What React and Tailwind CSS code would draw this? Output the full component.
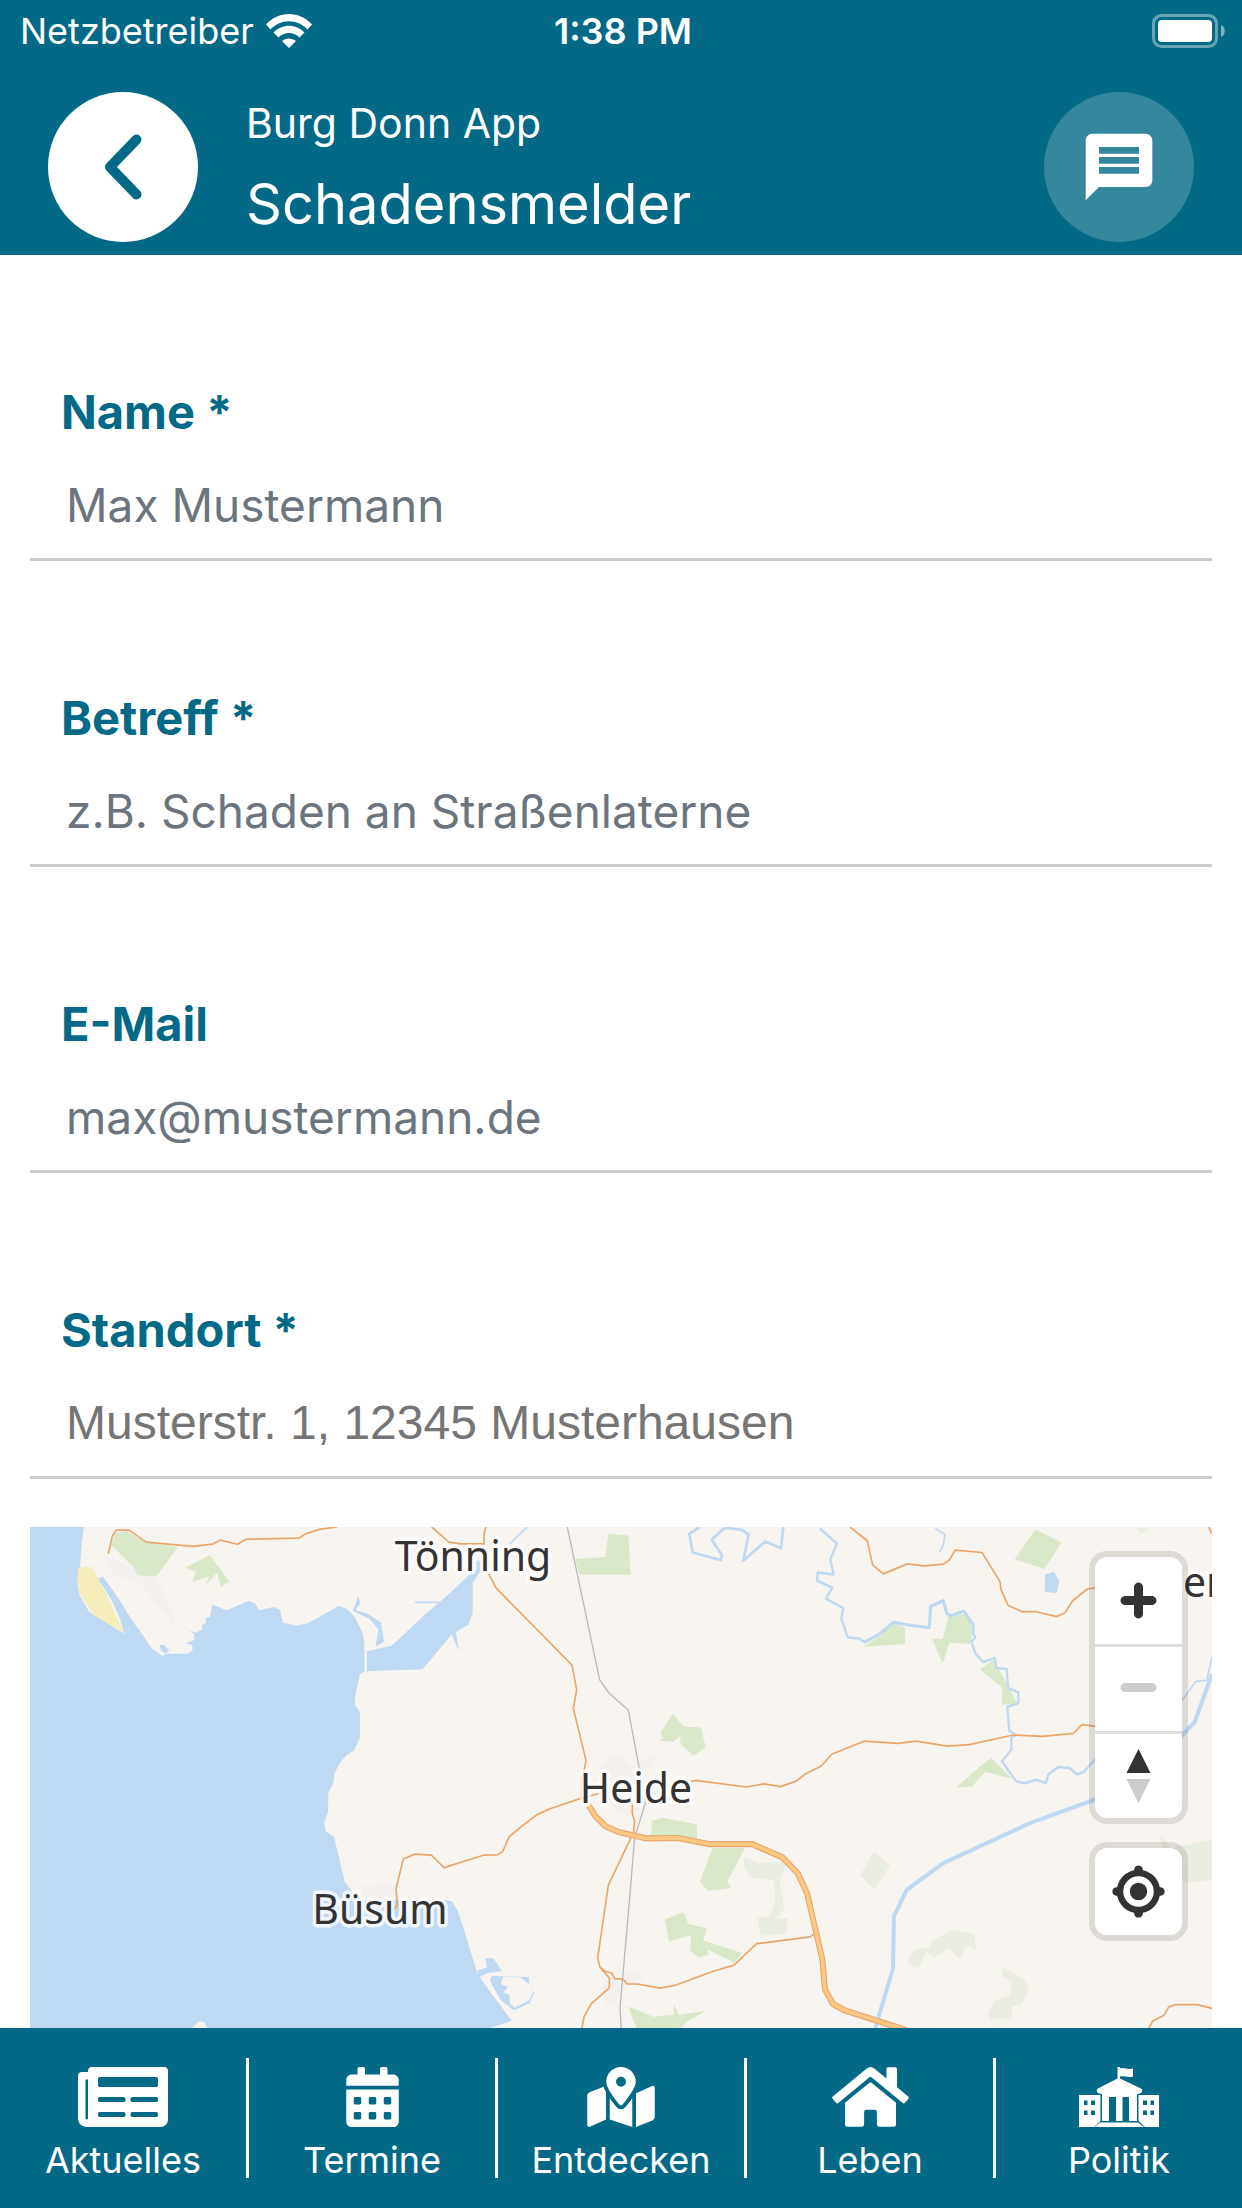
import React from 'react';
import { FaNewspaper, FaCalendarAlt, FaMapMarkedAlt, FaHome } from 'react-icons/fa';
import { MdMessage } from 'react-icons/md';
import clsx from 'clsx';

const fields = [
  { id: 'name', label: 'Name *', type: 'text', placeholder: 'Max Mustermann' },
  { id: 'subject', label: 'Betreff *', type: 'text', placeholder: 'z.B. Schaden an Straßenlaterne' },
  { id: 'email', label: 'E-Mail', type: 'email', placeholder: 'max@mustermann.de' },
  { id: 'location', label: 'Standort *', type: 'text', placeholder: 'Musterstr. 1, 12345 Musterhausen', search: true },
];

const TownHall = ({ className }) => (
  <svg viewBox="0 0 80 60" fill="currentColor" className={className} aria-hidden="true">
    <path d="M38.500 0h2.500v1.500c4-1.500 8 1.500 13 0v8c-5 1.500-9-1-13 0V11.500L62 21.500c2 1 1.500 4-1 5L58 27v27H50V30h-6.500v24H37V30h-7v24h-7V27l-3-.5c-2.500-1-3-4-1-5l19.500-10z" />
    <path d="M21 55.500h38l6 4.500H15.500z" />
    <path fillRule="evenodd" d="M0 28h21.500v26L15 60H0zM5 33.500v4.500h3.500v-4.500zm7 0v4.500h4v-4.500zM5 43.500V48h3.500v-4.500zm7 0V48h4v-4.500z" />
    <path fillRule="evenodd" d="M80 28H59.500v26l6.500 6H80zM75 33.500v4.500h-3.500v-4.500zm-7 0v4.500h-4v-4.500zM75 43.500V48h-3.500v-4.500zm-7 0V48h-4v-4.500z" />
  </svg>
);

const tabs = [
  { title: 'Aktuelles', icon: FaNewspaper, size: 'w-[90px] h-20' },
  { title: 'Termine', icon: FaCalendarAlt, size: 'w-[53px] h-[60px]' },
  { title: 'Entdecken', icon: FaMapMarkedAlt, size: 'w-[68px] h-[60px]' },
  { title: 'Leben', icon: FaHome, size: 'w-[77px] h-[68px]' },
  { title: 'Politik', icon: TownHall, size: 'w-20 h-[60px]' },
];

function StatusBar() {
  return (
    <div className="grid grid-cols-3 items-center h-[62px] pl-5 pr-4 text-[36px] leading-[44px]">
      <div className="flex items-center gap-3">
        <span>Netzbetreiber</span>
        <svg viewBox="0 0 46 34" className="w-[46px] h-[34px]" fill="currentColor" aria-hidden="true">
          <path d="M0 10.500C12.500-3.500 33.500-3.500 46 10.500L41.500 15.500C31.500 4.500 14.500 4.500 4.500 15.500z" />
          <path d="M7.500 18.500C16 9.500 30 9.500 38.500 18.500L33.500 23.500C28 17.500 18 17.500 12.500 23.500z" />
          <path d="M16 27C20 23.500 26 23.500 30 27L23 34z" />
        </svg>
      </div>
      <span className="text-center font-semibold">1:38 PM</span>
      <svg viewBox="0 0 74 34" className="w-[74px] h-[34px] justify-self-end" aria-label="Akku">
        <rect x="1.500" y="1.500" width="63" height="31" rx="8" fill="none" stroke="#fff" strokeOpacity="0.4" strokeWidth="3" />
        <rect x="6" y="6" width="54" height="22" rx="4" fill="#fff" />
        <path d="M69 11c5 1.500 5 10.500 0 12z" fill="#fff" fillOpacity="0.5" />
      </svg>
    </div>
  );
}

function Header() {
  return (
    <header className="shrink-0 bg-[#036986] text-white">
      <StatusBar />
      <div className="flex items-center gap-12 h-[193px] px-12 pt-[17px]">
        <button type="button" aria-label="Zurück" className="flex items-center justify-center size-[150px] shrink-0 rounded-full bg-white text-[#036986]">
          <svg viewBox="0 0 38 66" className="w-[38px] h-[66px]" fill="none" stroke="currentColor" strokeWidth="10" strokeLinecap="round" strokeLinejoin="round" aria-hidden="true">
            <path d="M32.500 5.500 6 33l26.500 27.500" />
          </svg>
        </button>
        <div className="flex-1 min-w-0 flex flex-col gap-5 pt-1">
          <p className="text-[41px] leading-[50px]">Burg Donn App</p>
          <h1 className="text-[56px] leading-[72px]">Schadensmelder</h1>
        </div>
        <button type="button" aria-label="Nachrichten" className="flex items-center justify-center size-[150px] shrink-0 rounded-full bg-[#35879d]">
          <MdMessage className="size-20" />
        </button>
      </div>
    </header>
  );
}

function Field({ id, label, type, placeholder, search }) {
  return (
    <div className="flex flex-col shrink-0 pt-[129px] pb-5 border-b-3 border-[#cbcbcb]">
      <label htmlFor={id} className="px-[31px] text-[47px] leading-[56px] font-bold text-[#036986]">{label}</label>
      <input
        id={id}
        type={type}
        placeholder={placeholder}
        className={clsx(
          'mt-8 h-[66px] px-9 bg-transparent outline-none',
          search
            ? "text-[48px] font-['Liberation_Sans',Arial,sans-serif] placeholder:text-[#757575]"
            : 'text-[46px] placeholder:text-[#6c757d]'
        )}
      />
    </div>
  );
}

function MapCanvas() {
  return (
    <svg viewBox="0 0 1182 501" preserveAspectRatio="xMidYMin slice" className="size-full" role="img" aria-label="Karte">
      <rect width="1182" height="501" fill="#f8f4f0" />
      <g transform="scale(.33333 .34439) translate(-90 -78)" strokeLinejoin="round">
        {/* built-up areas */}
        <g fill="#f3f0ed">
          <path d="M310 160l50 20 50 10 5 30 60 10 50 130-60-60-40-60-80-20-40-50z" />
          <path d="M1085 1122l110-8-10 45-95-6z" />
          <path d="M1835 742l30 5 20 28 90-38-40 60 30 20-20 70-60 30-70-40-20-90z" />
          <path d="M1805 1400l110-35 20 20-70 25-20 60-30-10z" />
        </g>
        {/* sea and estuary */}
        <path
          fill="#bfd9f2"
          d="M90 78H252L246 120 240 195 232 235 238 275 268 325 372 387 360 345 335 290 294 228 308 222 352 280 398 352 420 380 455 430 487 452 500 446H565L578 435 575 420 557 416 583 406 582 388 568 380 590 384 606 375V362L616 358 618 342 630 338 637 303 680 320 745 293 765 300 778 320 820 310 840 318 848 355 890 365 925 357 1015 308 1040 315 1065 340 1085 380 1093 410V440L1175 423 1200 400 1260 345 1350 270 1415 210 1430 200V175H1445V200L1418 240V330L1405 362 1368 383 1376 438 1355 390 1267 492 1175 494 1095 497 1080 505 1065 570V595L1080 615V690L1062 728 1040 740 1020 762 1003 795 1000 820 985 852 984 905 972 938 978 962 1002 978 1015 1030 1035 1110 1060 1140 1090 1160 1340 1162 1355 1165 1372 1190 1390 1240 1432 1375 1465 1420 1535 1512 1470 1533H90z"
        />
        <path fill="#f8f4f0" d="M576 1533l22-20 15 2 8 18z" />
        <path fill="#bfd9f2" d="M1074 280l8 18-14 18 2 5 32 8 42 28 8 54-25 14 8-50-26-30-35-16-15-8zM480 422l10-2 18 16-12 10-14-10zM1455 1330h25l26 38-40 4-30 14-4-20 30-10z" />
        <path fill="none" stroke="#f8f4f0" strokeWidth="7" d="M1097 440v56" />
        <path fillRule="evenodd" fill="#bfd9f2" d="M1475 1382l112 3v18l16 28-14 30-48 20-40-30-31-55zM1510 1384l-8 22 22 8-14 16 18 6 2 26 14 12 44-22 12-24-10-20-28-22z" />
        {/* beach and forests */}
        <path fill="#f5edba" d="M235 195h42l45 85 48 105-90-52-40-60-7-38z" />
        <g fill="#d8e8c8">
          <path d="M333 130l12-34 36-6 58 32 95 14-66 86-56-4-8-20z" />
          <path d="M555 196l75-36 58 76-26 16-10-42-36 38 12-26-52 16 12-30z" />
          <path d="M1825 98l60 5 7 114h-154l-12-46 90-6z" />
          <path d="M2018 620l34 38 51 2 14 58-38 24-38-36v-22l-22 18-42-4 12-8-8-14z" />
          <path d="M1955 932l34-10 102 20v40l-137-6z" />
          <path d="M2138 1010h96l-52 98 12 18-70 8-24-26z" />
          <path d="M1995 1217l56-20 14 34 56 12-12 36 118 36-24 28-80-38 2 14-26 10-28-20 2-46-66 18z" />
          <path d="M1884 1470l76 30 62-6 0-30 14 32 84-14-58 32-20 19h-132z" />
          <path d="M2592 426l50-34 40-34 33 12v48z" />
          <path d="M2846 338l50-8 26 38-12 50-62-4-20 60-32-72 32 2z" />
          <path d="M2940 492l40-28 24 40 20 34 28 54-46 2v-50z" />
          <path d="M2868 835l60-52 46-34 62 60-80-20-40 42z" />
          <path d="M3106 86l78 36-50 78-90-28z" />
        </g>
        <g fill="#eaede1">
          <path d="M2233 1036l46 18 84-8-24 56 14 84-24 30 36-2-8 46-74 4-12-52 40-4 16-52-6-52-70-8-20-30z" />
          <path d="M2622 1020l48 40-46 70-44-40z" />
          <path d="M2730 1318l22-16 34-4 14-22 62-28 60 10 8 46-34-14-14 44-34-32-46 26-22-18-24 48-32-12z" />
          <path d="M3008 1356l66 38 14 24-24 46-28 8v34h-68l14 27-18-40 18-40 50-16 4-40-30-14z" />
          <path d="M3475 966l40 44 121-24v118l-86 6-60-100z" />
          <path d="M3410 82l30-4 4 12-22 6z" />
        </g>
        {/* rivers and canal */}
        <g fill="none" stroke="#bfd9f2" strokeWidth="7">
          <path strokeWidth="5" d="M1582 78l-54 50M1245 297h75" />
          <path strokeWidth="8" d="M2100 78L2068 98 2078 152 2163 174 2166 160 2135 115 2172 82M2172 80L2225 86 2246 100 2230 176 2296 120 2343 140 2350 78" />
          <path d="M2459 82L2511 126 2491 172 2501 216 2453 210 2451 234 2497 254 2478 286 2530 314 2524 344 2543 398 2577 402 2595 413" />
          <path strokeWidth="9" d="M2592 413L2640 388 2680 355 2735 364 2788 370 2792 308 2830 292 2840 328 2852 336 2892 322 2922 366" />
          <path d="M2922 366L2920 385 2926 400 2914 410 2926 445 2950 470 2984 458 2990 488 3020 490 3024 545 3055 558V590L3022 600 3028 670 3048 682 3034 690V725L3006 758 3048 816 3074 822 3110 812 3138 822 3145 796 3175 775 3210 778 3230 796 3250 790 3286 752" />
          <path strokeWidth="5" d="M2806 82L2835 100 2830 130 2818 152M3636 455L3620 523 3588 526 3546 582" />
          <path strokeWidth="12" d="M3636 505L3584 645 3524 705" />
          <path strokeWidth="12" d="M3300 864L3090 938 2830 1054 2720 1132 2682 1208 2679 1360 2626 1533" />
        </g>
        <path fill="#bfd9f2" d="M3136 216l26-8 16 28-8 34-36-4z" />
        {/* railway */}
        <path fill="none" stroke="#bbb" strokeWidth="4" d="M1702 78L1799 522 1827 560 1885 610 1920 790 1936 880 1904 980 1885 1200 1860 1475 1864 1533" />
        {/* roads */}
        <g fill="none" stroke="#e9a76d" strokeWidth="5">
          <path d="M325 156l12-52 12-17h38l52 35 138 12 60-6 24-12 52 12 24-14 160-4 20-12 44-14 50-6" />
          <path d="M1295 78L1347 122 1382 127H1452V97L1458 78M1465 212L1488 255 1716 479 1730 551 1720 605 1758 755 1744 830V865" />
          <path d="M1180 1190L1192 1176 1188 1128 1210 1042 1244 1028 1294 1031 1332 1067 1450 1031 1492 1030 1508 1020 1528 977 1555 955 1610 914 1650 896 1742 866 1800 851" />
          <path d="M2070 818L2085 814 2240 833 2293 824 2342 832 2388 816 2415 796 2464 772 2495 738 2592 700 2695 706 2748 700 2842 714 2908 710 3040 682 3128 686 3220 677 3246 652 3290 657" />
          <path d="M1897 880V910L1904 932 1900 970 1892 982 1825 1118 1793 1330 1800 1356 1828 1388V1416L1774 1462 1752 1500 1746 1533" />
          <path d="M1800 1356L1815 1368 1835 1373 1845 1390H1868L1882 1405H1912L1980 1417 2028 1408 2140 1368 2202 1350 2270 1288 2430 1268 2448 1255" />
          <path d="M2550 78L2602 118 2618 188 2650 214 2722 185 2772 191 2830 186 2848 174 2866 145 2946 152 3000 236 3003 260 3024 305 3066 324H3108L3170 338 3195 327 3218 292 3262 258 3290 254" />
          <path d="M3446 1533L3458 1513 3492 1496 3506 1472 3526 1465H3592L3636 1476M3626 78L3636 98" />
        </g>
        <path fill="none" stroke="#e9a76d" strokeWidth="18" d="M1765 885l22 34 30 28 36 16 84 19 96-1 96 18h128l90 38 46 46 28 58 46 192 8 88 24 42 34 18 186 58" />
        <path fill="none" stroke="#fdc883" strokeWidth="11" d="M1765 885l22 34 30 28 36 16 84 19 96-1 96 18h128l90 38 46 46 28 58 46 192 8 88 24 42 34 18 186 58" />
      </g>
      <g fill="#333" stroke="#fff" strokeOpacity="0.8" strokeWidth="7" strokeLinejoin="round" paintOrder="stroke" textAnchor="middle" className="text-[41px] font-['Noto_Sans','Open_Sans',sans-serif]">
        <text x="443" y="44">Tönning</text>
        <text x="606" y="276">Heide</text>
        <text x="350" y="397">Büsum</text>
        <text x="1153" y="70" textAnchor="start">en</text>
      </g>
    </svg>
  );
}

function MapControls() {
  const button = 'flex items-center justify-center size-[87px]';
  const group = 'rounded-xl bg-white overflow-hidden text-[#333] shadow-[0_0_0_6px_rgba(0,0,0,0.1)]';

  return (
    <div className="absolute top-[30px] right-[30px] flex flex-col gap-[30px]">
      <div className={group}>
        <button type="button" aria-label="Vergrößern" className={button}>
          <svg viewBox="0 0 29 29" fill="currentColor" className="size-full">
            <path d="M14.500 8.500c-.75 0-1.500.75-1.500 1.500v3h-3c-.75 0-1.500.75-1.500 1.500S9.250 16 10 16h3v3c0 .75.75 1.500 1.500 1.500S16 19.750 16 19v-3h3c.75 0 1.500-.75 1.500-1.500S19.750 13 19 13h-3v-3c0-.75-.75-1.500-1.500-1.500z" />
          </svg>
        </button>
        <button type="button" aria-label="Verkleinern" disabled className={clsx(button, 'pb-[3px] border-t-3 border-[#ddd] text-[#ccc]')}>
          <svg viewBox="0 0 29 29" fill="currentColor" className="size-[87px] shrink-0">
            <path d="M10 13c-.75 0-1.500.75-1.500 1.500S9.250 16 10 16h9c.75 0 1.500-.75 1.500-1.500S19.750 13 19 13h-9z" />
          </svg>
        </button>
        <button type="button" aria-label="Nach Norden ausrichten" className={clsx(button, 'pb-[3px] border-t-3 border-[#ddd]')}>
          <svg viewBox="0 0 29 29" className="size-[87px] shrink-0">
            <path fill="currentColor" d="m10.500 14 4-8 4 8h-8z" />
            <path fill="#ccc" d="m10.500 16 4 8 4-8h-8z" />
          </svg>
        </button>
      </div>
      <div className={group}>
        <button type="button" aria-label="Mein Standort" className={button}>
          <svg viewBox="0 0 20 20" fill="currentColor" className="size-full">
            <path d="M10 4C9 4 9 5 9 5v.1A5 5 0 0 0 5.100 9H5s-1 0-1 1 1 1 1 1h.1A5 5 0 0 0 9 14.900v.1s0 1 1 1 1-1 1-1v-.1a5 5 0 0 0 3.900-3.900h.1s1 0 1-1-1-1-1-1h-.1A5 5 0 0 0 11 5.100V5s0-1-1-1zm0 2.500a3.500 3.500 0 1 1 0 7 3.500 3.500 0 1 1 0-7z" />
            <circle cx="10" cy="10" r="2" />
          </svg>
        </button>
      </div>
    </div>
  );
}

function TabBar() {
  return (
    <nav className="shrink-0 flex py-[30px] bg-[#036986] text-white">
      {tabs.map((tab) => (
        <a
          key={tab.title}
          href={`#${tab.title.toLowerCase()}`}
          className="flex-1 flex flex-col items-center h-[120px] pt-[9px] gap-[11px] border-r-3 border-white last:border-r-0"
        >
          <span className="flex items-center justify-center h-[60px]">
            <tab.icon className={clsx('shrink-0', tab.size)} />
          </span>
          <span className="text-[36px] leading-[44px]">{tab.title}</span>
        </a>
      ))}
    </nav>
  );
}

export default function App() {
  return (
    <div className="flex flex-col h-screen bg-white font-[Inter,'Liberation_Sans',sans-serif]">
      <Header />
      <main className="flex-1 min-h-0 overflow-hidden flex flex-col px-[30px]">
        <form className="flex flex-col shrink-0">
          {fields.map((field) => (
            <Field key={field.id} {...field} />
          ))}
        </form>
        <div className="relative flex-1 min-h-0 mt-12 overflow-hidden">
          <MapCanvas />
          <MapControls />
        </div>
      </main>
      <TabBar />
    </div>
  );
}
